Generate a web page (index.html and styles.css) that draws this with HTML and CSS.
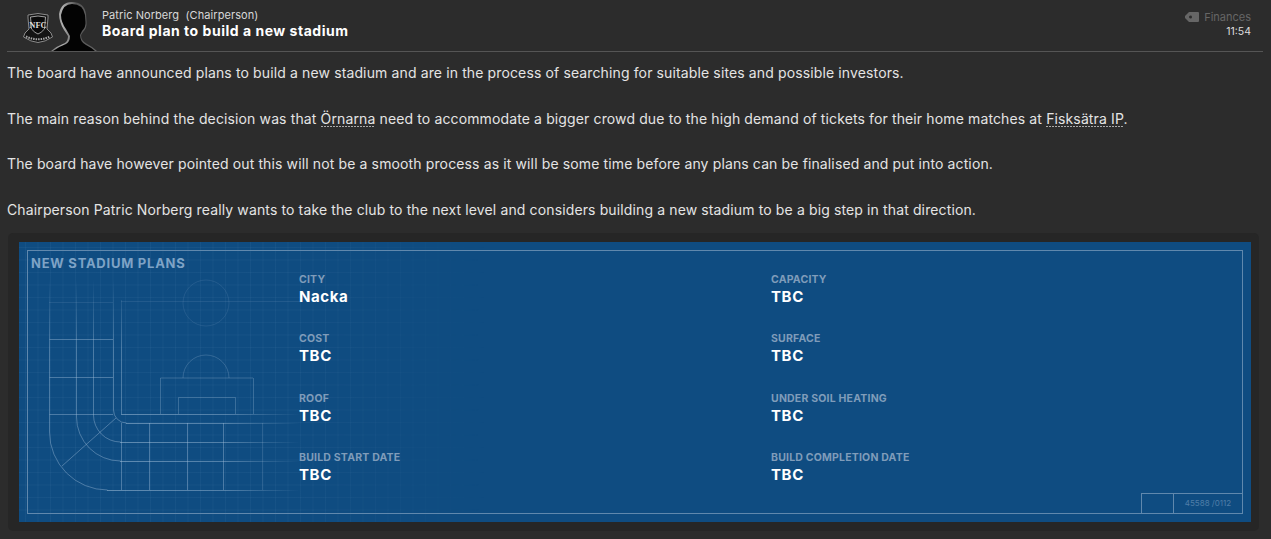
FILE: index.html
```html
<!DOCTYPE html>
<html lang="en">
<head>
<meta charset="utf-8">
<title>Board plan to build a new stadium</title>
<link rel="stylesheet" href="styles.css">
</head>
<body>
<header class="head">
  <div class="avatars">
    <svg class="crest" width="30" height="31" viewBox="0 0 30 31">
      <path d="M5 3 Q15 0 25 3 L25 6 L24 17 L28 21 L29.500 25 Q22 30 15 30.500 Q8 30 .5 25 L2 21 L6 17 L5 6 Z" fill="#141414" stroke="#8c8c8c" stroke-width="1"/>
      <path d="M7.500 5 Q15 3 22.500 5 L21.500 17 Q18 21 15 22 Q12 21 8.500 17 Z" fill="#0a0a0a" stroke="#c4c4c4" stroke-width=".8"/>
      <text x="15" y="15.500" class="crest-text">NFC</text>
      <path d="M3 24.500 Q15 30 27 24.500" fill="none" stroke="#aaa" stroke-width="2" stroke-dasharray="1.500 1"/>
    </svg>
    <svg class="person" width="46" height="49" viewBox="0 0 46 49">
      <defs>
        <linearGradient id="rim" x1="0" y1="0" x2="1" y2="0">
          <stop offset="0" stop-color="#777"/><stop offset=".25" stop-color="#b0b0b0"/><stop offset=".55" stop-color="#555"/><stop offset="1" stop-color="#666"/>
        </linearGradient>
      </defs>
      <path d="M0 49 Q6 44 14 41 Q17 39 17 34 L13 28 Q8 20 8 12 Q10 0 21 0 Q33 0 35 12 L35.500 20 Q36 26 32 30 L30 33 Q30 39 36 42 Q42 45 46 49 Z" fill="url(#rim)"/>
      <path d="M2 49 Q7 45 15 42 Q19 40 19 34 L15 27 Q10 20 10 13 Q12 2 21 2 Q32 2 34 13 L34.500 20 Q35 25 31 29 L29 33 Q29 40 35 43 Q41 46 44 49 Z" fill="#030303"/>
    </svg>
  </div>
  <div class="who">
    <div class="sender">Patric Norberg&nbsp; (Chairperson)</div>
    <h1 class="subject">Board plan to build a new stadium</h1>
  </div>
  <div class="meta">
    <div class="tag">
      <svg class="tag-icon" width="14" height="10" viewBox="0 0 14 10"><path d="M4 0 H13 Q14 0 14 1 V9 Q14 10 13 10 H4 L0 6 V4 Z M5.500 3.500 A1.500 1.500 0 1 0 5.510 6.500 A1.500 1.500 0 1 0 5.500 3.500 Z" fill="#666" fill-rule="evenodd"/></svg>
      <span>Finances</span>
    </div>
    <div class="time">11:54</div>
  </div>
</header>
<main class="body">
  <p>The board have announced plans to build a new stadium and are in the process of searching for suitable sites and possible investors.</p>
  <p>The main reason behind the decision was that <span class="link">Örnarna</span> need to accommodate a bigger crowd due to the high demand of tickets for their home matches at <span class="link">Fisksätra IP</span>.</p>
  <p>The board have however pointed out this will not be a smooth process as it will be some time before any plans can be finalised and put into action.</p>
  <p>Chairperson Patric Norberg really wants to take the club to the next level and considers building a new stadium to be a big step in that direction.</p>
</main>
<section class="panel">
  <div class="blueprint">
    <div class="grid"></div>
    <svg class="plan" width="1232" height="280" viewBox="19 242 1232 280">
      <defs>
        <linearGradient id="fadeH" gradientUnits="userSpaceOnUse" x1="121" y1="0" x2="300" y2="0">
          <stop offset="0" stop-color="#9fbdd8" stop-opacity=".55"/><stop offset=".6" stop-color="#9fbdd8" stop-opacity=".45"/><stop offset="1" stop-color="#9fbdd8" stop-opacity="0"/>
        </linearGradient>
        <linearGradient id="fadeV" gradientUnits="userSpaceOnUse" x1="0" y1="280" x2="0" y2="350">
          <stop offset="0" stop-color="#9fbdd8" stop-opacity="0"/><stop offset="1" stop-color="#9fbdd8" stop-opacity=".42"/>
        </linearGradient>
      </defs>
      <g fill="none" stroke="#9fbdd8" stroke-opacity=".13">
        <circle cx="206" cy="303" r="23"/>
        <path d="M121 301.500 H300"/>
        <path d="M49 302.500 H113"/>
      </g>
      <g fill="none" stroke="url(#fadeV)">
        <path d="M49.500 280 V432 M76.500 280 V417 M93.500 280 V415 M113.500 280 V410 M121.500 300 V414"/>
      </g>
      <g fill="none" stroke="#9fbdd8" stroke-opacity=".42">
        <path d="M49.500 339.500 H113 M49.500 377.500 H113 M49.500 414.500 H113"/>
        <path d="M49.500 432 A58 58 0 0 0 107.500 490"/>
        <path d="M76.500 417 A44 44 0 0 0 120.500 461"/>
        <path d="M93.500 415 A27 27 0 0 0 120.500 442"/>
        <path d="M113.500 410 A13 13 0 0 0 126.500 423"/>
        <path d="M62 466 L116 418"/>
        <path d="M121.500 423 V490 M149.500 423 V490 M187.500 423 V490 M223.500 423 V490"/>
        <path d="M160.500 378 H253 M160.500 378 V414 M253.500 378 V414 M178.500 397.500 H235.500 V414 M178.500 397.500 V414" stroke-opacity=".3"/>
        <path d="M183 378 A23 23 0 0 1 229 378" stroke-opacity=".25"/>
      </g>
      <g fill="none" stroke="url(#fadeH)">
        <path d="M121 414.500 H300 M126 423.500 H300 M120 442.500 H300 M120 461.500 H300 M107 490.500 H300"/>
      </g>
      <path d="M262.500 423 V490" stroke="#9fbdd8" stroke-opacity=".18" fill="none"/>
    </svg>
    <div class="frame">
      <h2 class="plan-title">NEW STADIUM PLANS</h2>
      <dl class="facts">
        <div class="fact"><dt>CITY</dt><dd>Nacka</dd></div>
        <div class="fact"><dt>CAPACITY</dt><dd>TBC</dd></div>
        <div class="fact"><dt>COST</dt><dd>TBC</dd></div>
        <div class="fact"><dt>SURFACE</dt><dd>TBC</dd></div>
        <div class="fact"><dt>ROOF</dt><dd>TBC</dd></div>
        <div class="fact"><dt>UNDER SOIL HEATING</dt><dd>TBC</dd></div>
        <div class="fact"><dt>BUILD START DATE</dt><dd>TBC</dd></div>
        <div class="fact"><dt>BUILD COMPLETION DATE</dt><dd>TBC</dd></div>
      </dl>
      <div class="stamp"><div class="stamp-blank"></div><div class="stamp-code">45588 /0112</div></div>
    </div>
  </div>
</section>
</body>
</html>
```
FILE: styles.css
```css
* { box-sizing: border-box; }
html, body { margin: 0; height: 100%; }
body {
  background: #2c2c2c;
  color: #e8e8e8;
  font-family: "Inter", "Liberation Sans", sans-serif;
  overflow: hidden;
}
.head {
  display: flex;
  height: 52px;
  margin: 0 8px 0 7px;
  border-bottom: 1px solid #555;
}
.avatars { display: flex; align-items: flex-start; width: 95px; padding: 2px 0 0 16px; }
.crest { margin-top: 10px; flex: none; }
.crest-text { font: 700 8.500px "Liberation Serif", serif; fill: #ddd; text-anchor: middle; }
.person { flex: none; margin-left: -2px; }
.who { flex: 1; padding-top: 8px; }
.sender { font-size: 11px; line-height: 14px; color: #d8d8d8; letter-spacing: .07px; }
.subject { margin: 0; font-size: 14px; line-height: 18px; font-weight: 700; color: #fff; letter-spacing: .52px; }
.meta { padding: 10px 12px 0 0; text-align: right; font-size: 11px; }
.tag { display: flex; align-items: center; justify-content: flex-end; gap: 5px; height: 14px; color: #666; }
.time { color: #ddd; font-size: 10.500px; line-height: 16px; }
.body { margin: 0 7px; padding-top: 10px; height: 181px; font-size: 14px; line-height: 22.750px; color: #e4e4e4; letter-spacing: .127px; }
.body p { margin: 0 0 22.750px; white-space: nowrap; }
.link {
  background-image: repeating-linear-gradient(to right, #aaa 0, #aaa 2px, transparent 2px, transparent 3px);
  background-size: 100% 1px;
  background-position: 0 100%;
  background-repeat: no-repeat;
}
.panel {
  margin: 0 12px 0 8px;
  height: 298px;
  padding: 9px 8px 9px 11px;
  background: #262626;
  border-radius: 5px;
}
.blueprint { position: relative; height: 280px; background: #0f4c81; padding: 8px; }
.grid {
  position: absolute; inset: 0;
  background-image:
    linear-gradient(to right, rgba(130,170,210,.075) 1px, transparent 1px),
    linear-gradient(to bottom, rgba(130,170,210,.075) 1px, transparent 1px);
  background-size: 12.500px 12.500px;
  background-position: 6px 5px;
  -webkit-mask-image: linear-gradient(to right, #000 0, #000 270px, transparent 470px);
  mask-image: linear-gradient(to right, #000 0, #000 270px, transparent 470px);
}
.plan { position: absolute; left: 0; top: 0; }
.frame { position: relative; height: 264px; border: 1px solid #6088ad; }
.plan-title {
  margin: 0;
  padding: 5px 0 0 3px;
  font-size: 13px;
  line-height: 15px;
  font-weight: 700;
  letter-spacing: .75px;
  color: #7ea3c6;
}
.facts {
  margin: 0;
  position: absolute;
  left: 271px; top: 22px;
  display: grid;
  grid-template-columns: 472px 300px;
  grid-auto-rows: 59.300px;
}
.fact dt { font-size: 10.500px; line-height: 13px; font-weight: 700; color: #7f9cba; letter-spacing: .2px; }
.fact dd { margin: 2px 0 0; font-size: 15px; line-height: 18px; font-weight: 700; color: #fff; letter-spacing: .6px; }
.stamp { position: absolute; right: 0; bottom: 0; width: 101px; height: 20px; display: flex; border: 1px solid #6088ad; border-right: 0; border-bottom: 0; }
.stamp-blank { width: 32px; border-right: 1px solid #6088ad; }
.stamp-code { flex: 1; text-align: center; font-size: 8px; line-height: 18px; color: #4f7ea8; }
```
